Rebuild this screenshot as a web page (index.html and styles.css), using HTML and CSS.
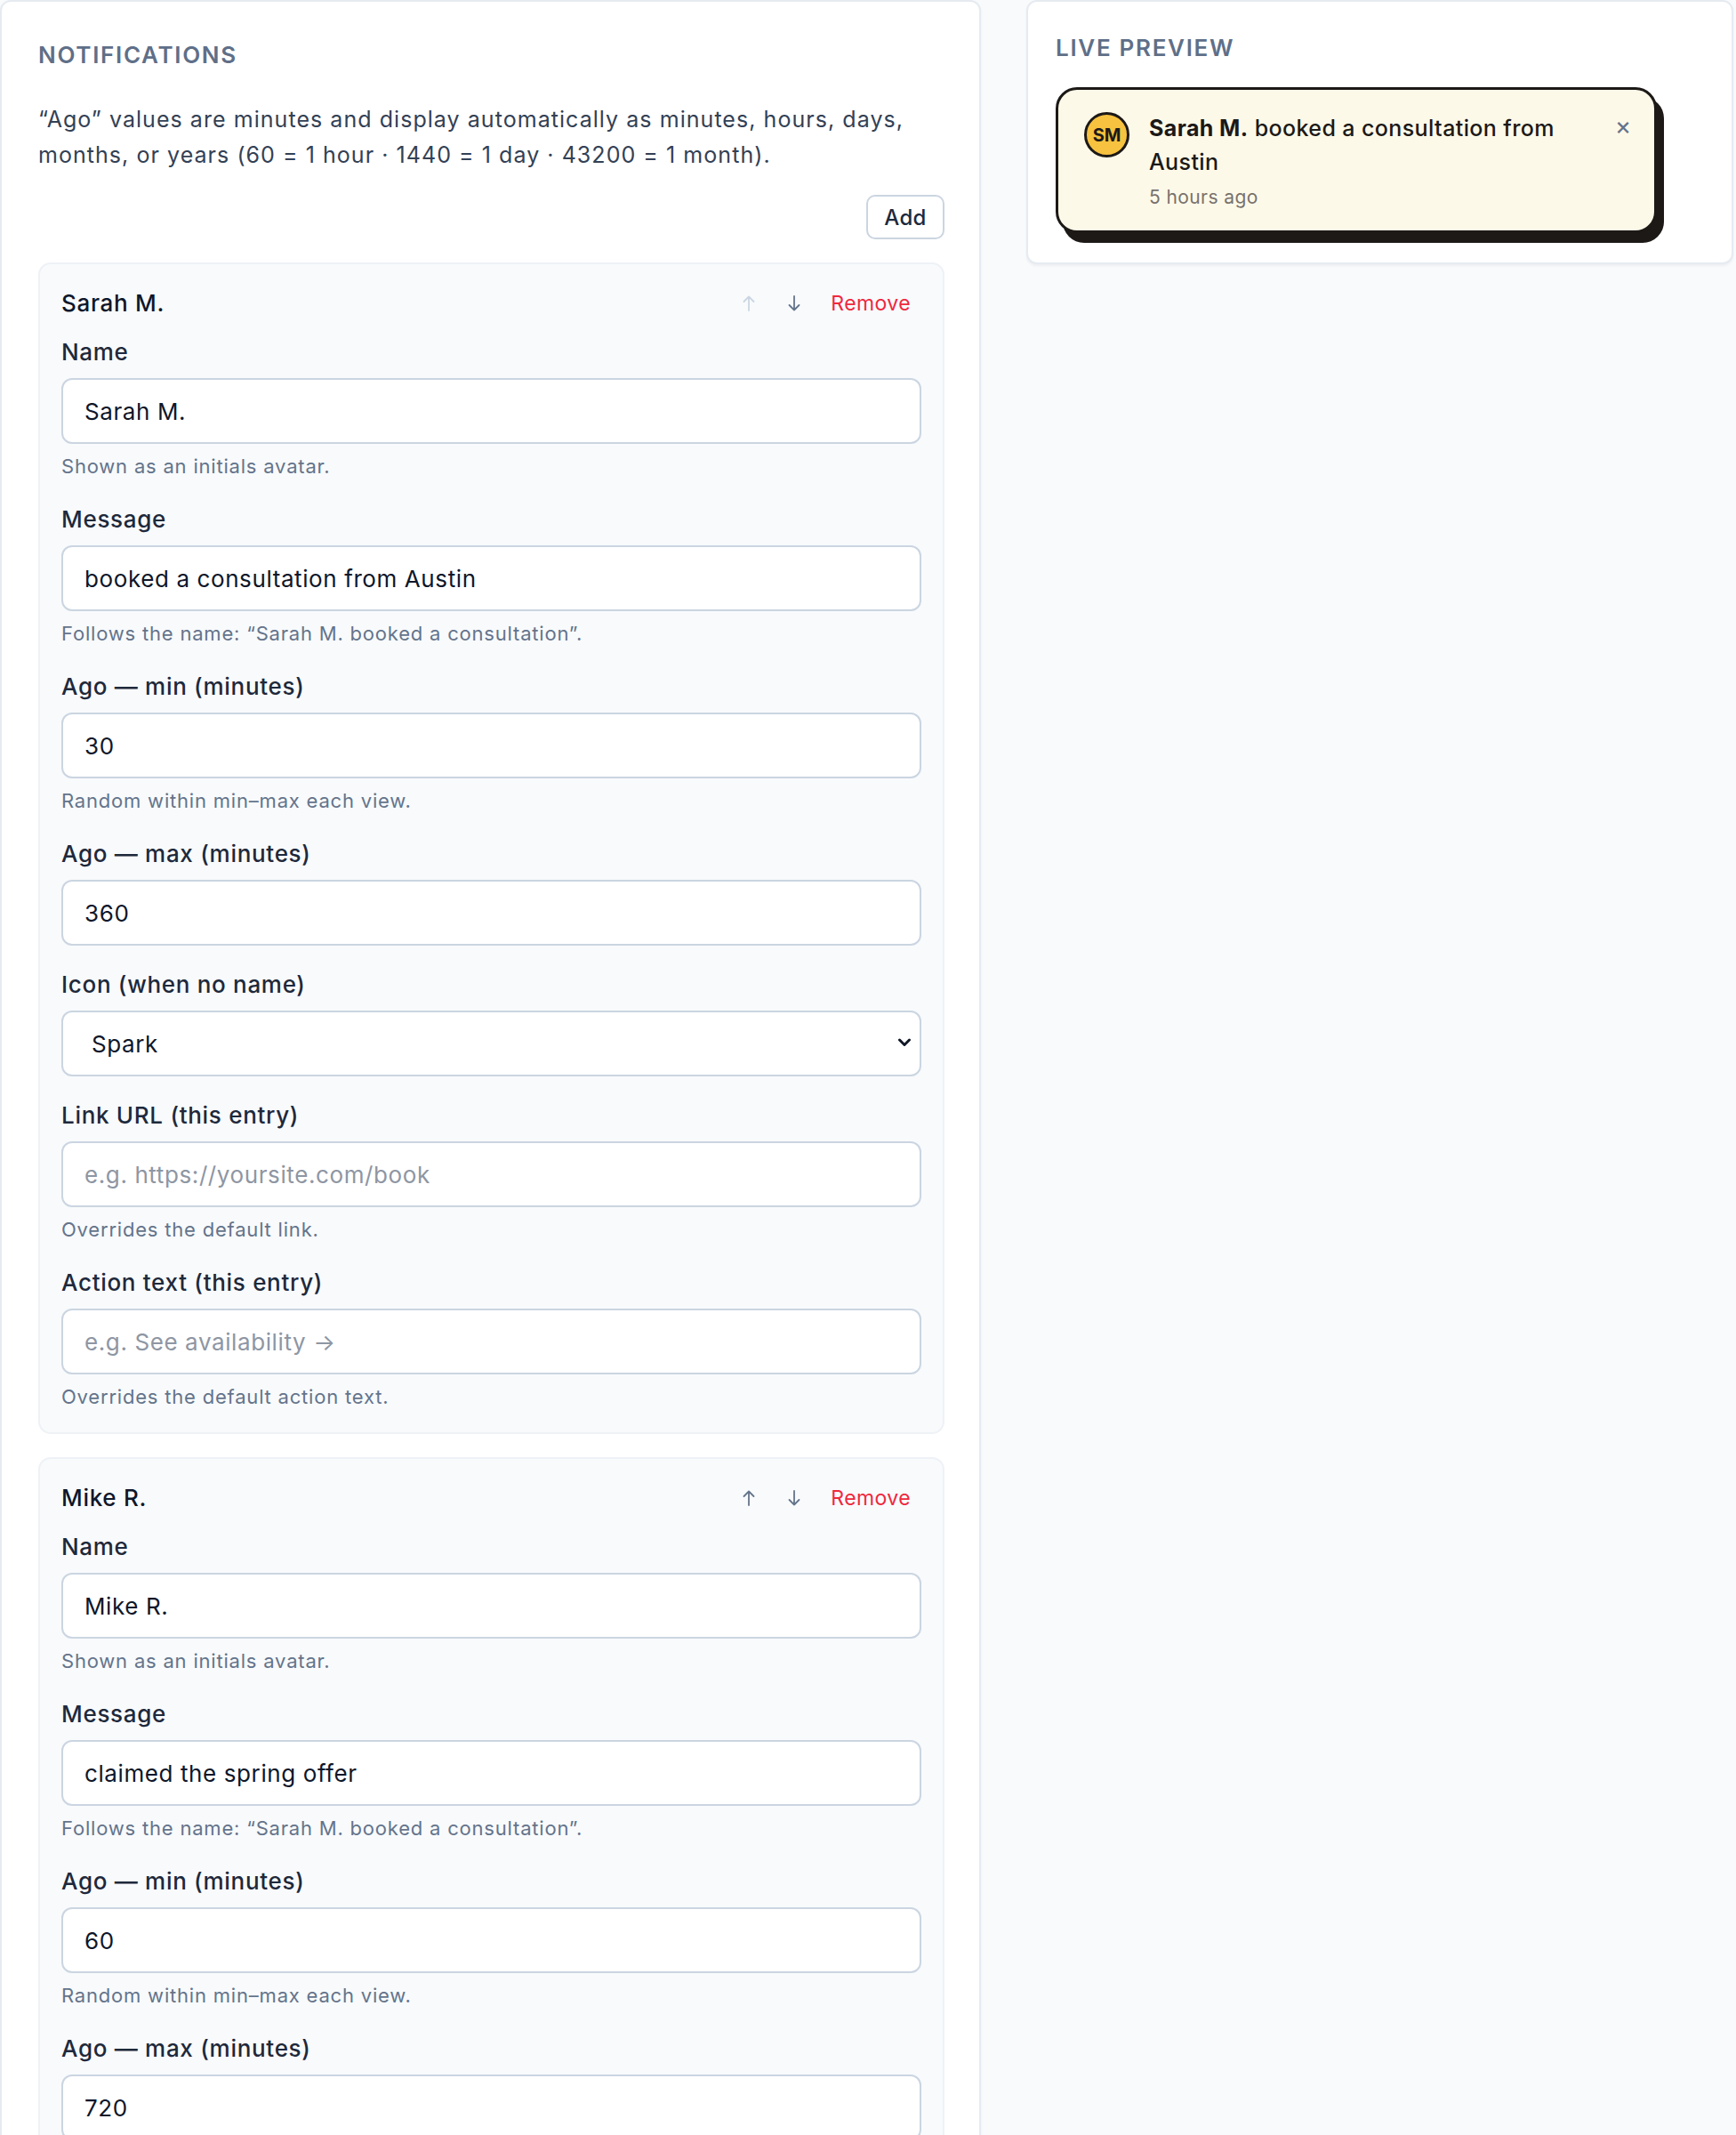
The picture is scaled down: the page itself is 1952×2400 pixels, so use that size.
FILE: index.html
```html
<!DOCTYPE html>
<html lang="en">

<head>
    <meta charset="UTF-8" />
    <meta name="viewport" content="width=device-width, initial-scale=1.0" />
    <title>Notifications - Editor</title>
    <link rel="stylesheet" href="styles.css">
</head>

<body>
    <div class="layout">
        <!-- Editor column -->
        <section class="panel editor">
            <h2 class="panel-title">Notifications</h2>
            <p class="panel-text">“Ago” values are minutes and display automatically as minutes, hours, days, months, or years (60 = 1 hour · 1440 = 1 day · 43200 = 1 month).</p>
            <div class="toolbar">
                <button class="btn">Add</button>
            </div>

            <div class="entry">
                <div class="entry-head">
                    <span class="entry-name">Sarah M.</span>
                    <div class="entry-actions">
                        <button class="icon-btn" disabled>
                            <svg width="14" height="18" viewBox="0 0 14 18"><path d="M7 17V1.5M1.5 7L7 1.5 12.5 7" /></svg>
                        </button>
                        <button class="icon-btn">
                            <svg width="14" height="18" viewBox="0 0 14 18"><path d="M7 1v15.5M1.5 11L7 16.5 12.5 11" /></svg>
                        </button>
                        <button class="link-btn">Remove</button>
                    </div>
                </div>
                <div class="field">
                    <label class="field-label">Name</label>
                    <input class="field-input" type="text" value="Sarah M.">
                    <p class="field-help">Shown as an initials avatar.</p>
                </div>
                <div class="field">
                    <label class="field-label">Message</label>
                    <input class="field-input" type="text" value="booked a consultation from Austin">
                    <p class="field-help">Follows the name: “Sarah M. booked a consultation”.</p>
                </div>
                <div class="field">
                    <label class="field-label">Ago — min (minutes)</label>
                    <input class="field-input" type="text" value="30">
                    <p class="field-help">Random within min–max each view.</p>
                </div>
                <div class="field">
                    <label class="field-label">Ago — max (minutes)</label>
                    <input class="field-input" type="text" value="360">
                </div>
                <div class="field">
                    <label class="field-label">Icon (when no name)</label>
                    <div class="select-wrap">
                        <select class="field-input field-select">
                            <option>Spark</option>
                        </select>
                        <svg class="select-arrow" width="16" height="12" viewBox="0 0 16 12"><path d="M2.5 3l5.5 5.5 5.5-5.5" /></svg>
                    </div>
                </div>
                <div class="field">
                    <label class="field-label">Link URL (this entry)</label>
                    <input class="field-input" type="text" placeholder="e.g. https://yoursite.com/book">
                    <p class="field-help">Overrides the default link.</p>
                </div>
                <div class="field">
                    <label class="field-label">Action text (this entry)</label>
                    <input class="field-input" type="text" placeholder="e.g. See availability →">
                    <p class="field-help">Overrides the default action text.</p>
                </div>
            </div>

            <div class="entry">
                <div class="entry-head">
                    <span class="entry-name">Mike R.</span>
                    <div class="entry-actions">
                        <button class="icon-btn">
                            <svg width="14" height="18" viewBox="0 0 14 18"><path d="M7 17V1.5M1.5 7L7 1.5 12.5 7" /></svg>
                        </button>
                        <button class="icon-btn">
                            <svg width="14" height="18" viewBox="0 0 14 18"><path d="M7 1v15.5M1.5 11L7 16.5 12.5 11" /></svg>
                        </button>
                        <button class="link-btn">Remove</button>
                    </div>
                </div>
                <div class="field">
                    <label class="field-label">Name</label>
                    <input class="field-input" type="text" value="Mike R.">
                    <p class="field-help">Shown as an initials avatar.</p>
                </div>
                <div class="field">
                    <label class="field-label">Message</label>
                    <input class="field-input" type="text" value="claimed the spring offer">
                    <p class="field-help">Follows the name: “Sarah M. booked a consultation”.</p>
                </div>
                <div class="field">
                    <label class="field-label">Ago — min (minutes)</label>
                    <input class="field-input" type="text" value="60">
                    <p class="field-help">Random within min–max each view.</p>
                </div>
                <div class="field">
                    <label class="field-label">Ago — max (minutes)</label>
                    <input class="field-input" type="text" value="720">
                </div>
                <div class="field">
                    <label class="field-label">Icon (when no name)</label>
                    <div class="select-wrap">
                        <select class="field-input field-select">
                            <option>Spark</option>
                        </select>
                        <svg class="select-arrow" width="16" height="12" viewBox="0 0 16 12"><path d="M2.5 3l5.5 5.5 5.5-5.5" /></svg>
                    </div>
                </div>
            </div>
        </section>

        <!-- Preview column -->
        <section class="panel preview">
            <h2 class="panel-title">Live preview</h2>
            <div class="toast">
                <div class="avatar">SM</div>
                <div class="toast-body">
                    <p class="toast-text"><strong>Sarah M.</strong> booked a consultation from Austin</p>
                    <p class="toast-time">5 hours ago</p>
                </div>
                <button class="toast-close">×</button>
            </div>
        </section>
    </div>
</body>

</html>
```

FILE: styles.css
```css
body {
    margin: 0;
    background: #f8fafc;
    font-family: 'Inter', 'Noto Sans', sans-serif;
    color: #1e293b;
}

button,
input,
select {
    font-family: inherit;
}

.layout {
    display: grid;
    grid-template-columns: 1103px 795px;
    column-gap: 51px;
    align-items: start;
}

.panel {
    background: white;
    border: 2px solid #e6ebf1;
    border-radius: 12px;
    box-shadow: 0 2px 3px rgba(15, 23, 42, 0.05);
}

.editor {
    padding: 40px 39px 40px 41px;
}

.preview {
    padding: 32px 31px 33px;
}

.panel-title {
    margin: 0;
    font-size: 26px;
    line-height: 39px;
    font-weight: 600;
    letter-spacing: 0.065em;
    text-transform: uppercase;
    color: #5f6f88;
}

.panel-text {
    margin: 33px 0 0;
    font-size: 25px;
    line-height: 40px;
    letter-spacing: 1.05px;
    color: #334155;
}

.toolbar {
    display: flex;
    justify-content: flex-end;
    margin: 25px 0 26px;
}

.btn {
    width: 88px;
    height: 50px;
    background: white;
    border: 2px solid #cbd5e1;
    border-radius: 10px;
    font-size: 24px;
    font-weight: 500;
    letter-spacing: 0.3px;
    color: #1e293b;
    cursor: pointer;
}

/* One notification entry */
.entry {
    background: #f8fafc;
    border: 2px solid #eef2f6;
    border-radius: 14px;
    padding: 26px 24px 24px;
    margin-bottom: 26px;
}

.entry-head {
    display: flex;
    align-items: center;
    justify-content: space-between;
    margin-bottom: 19px;
}

.entry-name {
    font-size: 26px;
    line-height: 36px;
    font-weight: 500;
    letter-spacing: 0.7px;
    color: #0f172a;
}

.entry-actions {
    display: flex;
    align-items: center;
    gap: 7px;
}

.icon-btn {
    width: 44px;
    height: 36px;
    display: flex;
    align-items: center;
    justify-content: center;
    padding: 0;
    background: none;
    border: none;
    cursor: pointer;
}

.icon-btn svg {
    fill: none;
    stroke: #64748b;
    stroke-width: 1.8;
    stroke-linecap: round;
    stroke-linejoin: round;
}

.icon-btn:disabled svg {
    stroke: #cbd5e1;
}

.link-btn {
    padding: 0 12px;
    background: none;
    border: none;
    font-size: 23px;
    line-height: 36px;
    letter-spacing: 0.4px;
    color: #f0283c;
    cursor: pointer;
}

.field {
    margin-bottom: 26px;
}

.field:last-child {
    margin-bottom: 0;
}

.field-label {
    display: block;
    margin-bottom: 11px;
    font-size: 26px;
    line-height: 36px;
    font-weight: 500;
    letter-spacing: 0.7px;
    color: #1e293b;
}

.field-input {
    display: block;
    box-sizing: border-box;
    width: 100%;
    height: 74px;
    padding: 0 24px;
    background: white;
    border: 2px solid #cbd5e1;
    border-radius: 12px;
    font-size: 26px;
    letter-spacing: 0.6px;
    color: #0f172a;
    outline: none;
}

.field-input::placeholder {
    color: #8e96a3;
}

.select-wrap {
    position: relative;
}

.field-select {
    appearance: none;
    padding-left: 32px;
}

.select-arrow {
    position: absolute;
    right: 11px;
    top: 30px;
    fill: none;
    stroke: #111827;
    stroke-width: 3;
    stroke-linecap: round;
    stroke-linejoin: round;
}

.field-help {
    margin: 10px 0 0;
    font-size: 22px;
    line-height: 31px;
    letter-spacing: 0.8px;
    color: #64748b;
}

/* Preview toast */
.preview .panel-title {
    margin-bottom: 25px;
}

.toast {
    display: flex;
    align-items: flex-start;
    gap: 22px;
    width: 676px;
    box-sizing: border-box;
    padding: 24px 20px 22px 29px;
    background: #fdf9e9;
    border: 3px solid #1c1917;
    border-radius: 24px;
    box-shadow: 8px 11px 0 #1c1917;
}

.avatar {
    flex-shrink: 0;
    width: 51px;
    height: 51px;
    box-sizing: border-box;
    margin-top: 1px;
    border: 3px solid #1c1917;
    border-radius: 50%;
    background: #f7c23f;
    display: flex;
    align-items: center;
    justify-content: center;
    font-size: 20px;
    font-weight: 700;
    color: #1c1917;
}

.toast-body {
    flex: 1;
}

.toast-text {
    margin: 0;
    font-size: 25px;
    line-height: 38px;
    font-weight: 500;
    letter-spacing: 0.4px;
    color: #1c1917;
}

.toast-text strong {
    font-weight: 700;
}

.toast-time {
    margin: 6px 0 0;
    font-size: 21px;
    line-height: 30px;
    letter-spacing: 0.4px;
    color: #78716c;
}

.toast-close {
    flex-shrink: 0;
    width: 30px;
    height: 30px;
    padding: 0;
    margin-top: 1px;
    background: none;
    border: none;
    font-size: 28px;
    line-height: 30px;
    color: #64748b;
    cursor: pointer;
}
```
